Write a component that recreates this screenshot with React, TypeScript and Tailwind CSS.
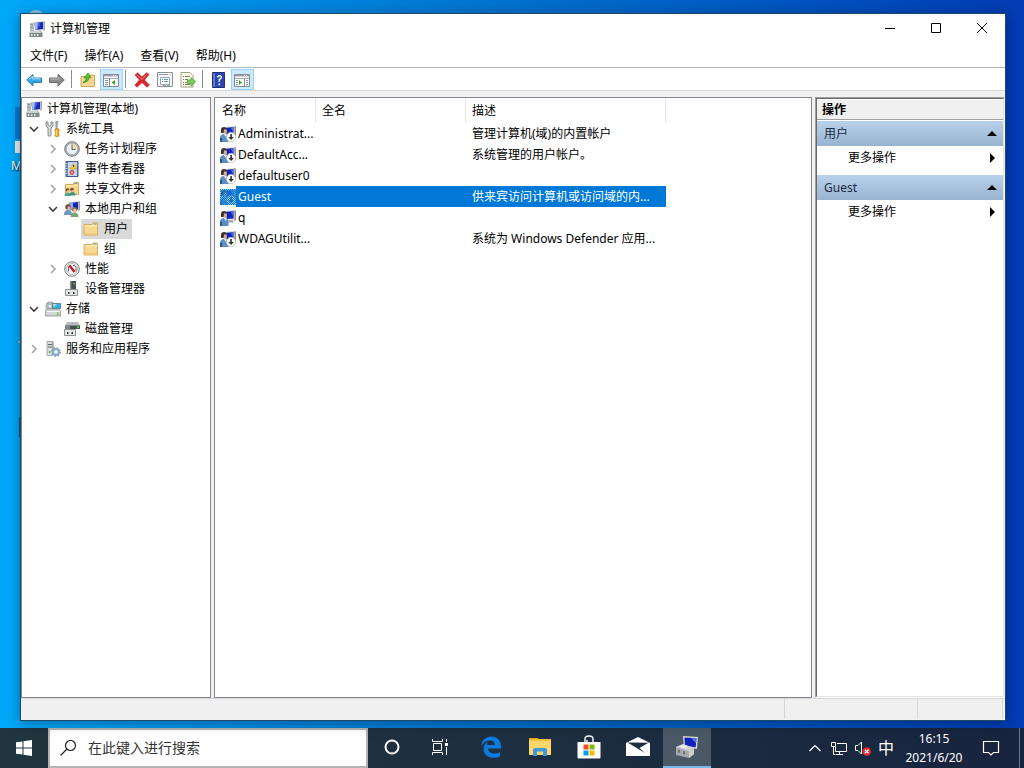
import { useState, ReactNode } from 'react';

type IconProps = { className?: string };

const Svg = ({ children, className = 'size-4', box = '0 0 16 16' }: { children: ReactNode; className?: string; box?: string }) => (
  <svg viewBox={box} className={`${className} shrink-0`} fill="none" aria-hidden="true">
    {children}
  </svg>
);

const ComputerIcon = ({ className }: IconProps) => (
  <Svg className={className}>
    <path d="M1 2h4v8H1z" fill="#b4babd" />
    <path d="M1.500 3h2.500v1H1.500zM1.500 6h2v1h-2z" fill="#8a9397" />
    <path d="m4 1 11-1v9L6 10z" fill="#dedcd3" />
    <path d="m14.500 0 1.500.5V9l-1.500 1z" fill="#a4a5a2" />
    <path d="m5.500 2 8.500-1v7l-7.500 1z" fill="#1428b8" />
    <path d="M5.500 2 9 1.500 8.500 8.500l-2 .5z" fill="#a4bbf3" />
    <path d="m9 1.500 2-.3v3L8.500 8z" fill="#4560e2" />
    <path d="m8 10 4-.5.500 1.500H8z" fill="#a4a7a6" />
    <path d="M.5 11h12l1 1v4H.5z" fill="#7f878a" />
    <path d="M1 10h10l1.500 2H.5z" fill="#cdd1d1" />
    <path d="M2 13h1.500v2H2zM5 13h1.500v2H5zM8 13h1.500v2H8z" fill="#dfe3e2" />
    <path d="M11 13h1v1h-1z" fill="#5fae4c" />
  </Svg>
);

const ToolsIcon = () => (
  <Svg>
    <path d="M1 1v4l2 2v7.500q1.500 1.500 3 0V7l2-2V1H6v3L4.500 5 3 4V1z" fill="#d4d7d8" stroke="#6f7578" strokeWidth=".8" />
    <path d="M11 0h1.500l.5 2-.8 1.500V8h-1.400V3.500L10.500 2z" fill="#a3a8aa" stroke="#7b8082" strokeWidth=".5" />
    <path d="M10 8h4v2l-.5 1 .5 4q-2 1.500-4 0l.5-4-.5-1z" fill="#f0ae18" stroke="#bd7b0b" strokeWidth=".7" />
    <path d="M11.300 9v6" stroke="#ffe08a" />
  </Svg>
);

const ClockIcon = () => (
  <Svg>
    <circle cx="8" cy="8" r="7.300" fill="#b9bcbd" stroke="#77797a" />
    <circle cx="8" cy="8" r="5.700" fill="#eaf1f9" stroke="#8f9599" strokeWidth=".6" />
    <path d="M8 2.800V8h5A5 5 0 0 0 8 2.800z" fill="#f4dca6" />
    <path d="M8 3.500V8.500h3.500" stroke="#4f617a" />
  </Svg>
);

const EventIcon = () => (
  <Svg>
    <path d="M2 .500h12v15H2z" fill="#5d7db5" stroke="#3d598e" />
    <path d="M4 1h9v14H4z" fill="#c5d5ec" />
    <path d="M1 2.500h2.500M1 5h2.500M1 7.500h2.500M1 10h2.500M1 12.500h2.500" stroke="#bfc7d3" />
    <path d="M9.500 2.500 12.800 8H6.200z" fill="#ffd528" stroke="#c4980e" strokeWidth=".6" />
    <path d="M9.500 4.200v2" stroke="#333" />
    <circle cx="8" cy="11.500" r="2.400" fill="#d94a4a" />
    <path d="m7.200 10.700 1.600 1.600m0-1.600-1.600 1.600" stroke="#fff" strokeWidth=".7" />
  </Svg>
);

const FolderIcon = () => (
  <Svg>
    <path d="M1 3.500h8l1-1.500h4.500v12H1z" fill="#f7da90" stroke="#d3aa58" strokeWidth=".9" />
    <path d="M10.500 3h3" stroke="#6d98bd" />
    <path d="M1.800 5h7.800l1-.5h3.200" stroke="#fff1c4" />
    <path d="M1.500 12h12.500v1.500H1.500z" fill="#efca76" />
  </Svg>
);

const SharedFolderIcon = () => (
  <Svg>
    <path d="M1.500 3.500H9l1-2h4.500v12h-13z" fill="#f5d584" stroke="#cda14a" strokeWidth=".9" />
    <path d="M10.500 2.500h3" stroke="#6d98bd" />
    <path d="M2 5h8l1-.5h3" stroke="#fff1c4" />
    <circle cx="3.500" cy="9" r="1.800" fill="#704a2c" />
    <circle cx="8" cy="8.500" r="1.800" fill="#704a2c" />
    <path d="M3 9h2v2H3zM7.500 9h2v2h-2z" fill="#e7b58d" />
    <path d="M.5 15q0-3.500 3-3.500t3.500 3.500z" fill="#57a58b" />
    <path d="M5.500 14.500q0-3.500 3-3.500t3 3.500z" fill="#3d8f86" />
  </Svg>
);

const UsersIcon = () => (
  <Svg>
    <path d="m4 1 11-1v9.500L5 10z" fill="#dbd9d1" />
    <path d="m14.500 0 1.500.5V9l-1.500 1z" fill="#9c9d9a" />
    <path d="m5.500 2 8.500-1v7.500H6z" fill="#1428b8" />
    <path d="M5.500 2 9 1.500V8H6z" fill="#8fa8ef" />
    <circle cx="4" cy="6" r="2.700" fill="#6b4a30" />
    <path d="M3.500 5.500h2.700v3.500H3.500z" fill="#e6b58f" />
    <path d="M0 14q0-5 4-5t4 5z" fill="#6b97c4" />
    <circle cx="10.500" cy="8.500" r="2.500" fill="#9c7a4d" />
    <path d="M9.500 8h2.500v3.500H9.500z" fill="#edc19d" />
    <path d="M6.500 16q0-4.500 4-4.500t4 4.500z" fill="#7aa56f" />
  </Svg>
);

const PerformanceIcon = () => (
  <Svg>
    <circle cx="8" cy="8" r="7.300" fill="#f7f7f6" stroke="#777b7d" />
    <circle cx="8" cy="8" r="5.500" fill="#fff" stroke="#a2a7a8" strokeWidth=".8" />
    <path d="M4.500 10.500V6l1-1.500M9 4.500h1.500l1.500 2v4" stroke="#5c6b71" />
    <path d="m5.500 4.500 5 6.500" stroke="#d01018" strokeWidth="2.400" />
  </Svg>
);

const DeviceIcon = () => (
  <Svg>
    <path d="M6 0h6v9H6z" fill="#4a4f50" />
    <path d="M6 0h1.500v9H6z" fill="#82898a" />
    <path d="M9.500 2H11v1.500H9.500z" fill="#50e84b" />
    <path d="M1.500 8.500h12v6h-12z" fill="#e6e6e4" stroke="#8c9192" />
    <path d="M4 11h1.500v2H4zM9 11h1.500v2H9z" fill="#303435" />
  </Svg>
);

const StorageIcon = () => (
  <Svg>
    <path d="M1 4q0-3 3-3h4v8H1z" fill="#d5dadb" stroke="#a2a8aa" strokeWidth=".8" />
    <circle cx="5" cy="5" r="3.500" fill="#b7bfc2" stroke="#8f989b" strokeWidth=".6" />
    <circle cx="5" cy="5" r="1" fill="#fff" />
    <path d="M7.500 2.500h8v5h-8z" fill="#39a9df" stroke="#4b7787" strokeWidth=".8" />
    <path d="M8 3h4L8.500 6.500z" fill="#9fe0f8" />
    <path d="m.5 10 2-2h10l3 2v5H.5z" fill="#d3d6d6" stroke="#858b8d" strokeWidth=".8" />
    <path d="M1 10.500h14" stroke="#f7f7f7" />
    <path d="M12 11.500h1.500V14H12z" fill="#3ccc38" />
  </Svg>
);

const DiskIcon = () => (
  <Svg>
    <path d="m1 5 2-4h11l2 4z" fill="#b7bcbc" />
    <path d="M1 4.500h15V8H1z" fill="#4a5051" />
    <path d="M1 4.500h5V8H1z" fill="#838989" />
    <path d="M13 5.500h2V7h-2z" fill="#4ce24a" />
    <path d="M.5 8.500h11v6H.500z" fill="#e6e6e4" stroke="#8c9192" />
    <path d="M3 11h1.500v2H3zM7.500 11H9v2H7.500z" fill="#303435" />
  </Svg>
);

const ServicesIcon = () => (
  <Svg>
    <path d="M2 0h6l1 1v13H2z" fill="#b5bdc1" />
    <path d="M2 .5h5.500v14H2z" fill="#d8dee0" stroke="#8c979c" strokeWidth=".7" />
    <path d="M3 3.500h4M3 6h4" stroke="#5d686e" />
    <path d="M4 10h1.500v2H4z" fill="#45ba44" />
    <circle cx="11" cy="11" r="3.300" fill="#aac8e2" stroke="#7b9fbd" strokeWidth="1.200" />
    <circle cx="11" cy="11" r="4.300" stroke="#7b9fbd" strokeWidth="1.200" strokeDasharray="1.700 1.700" />
    <circle cx="11" cy="11" r="1.300" fill="#fff" />
  </Svg>
);

const UserIcon = ({ disabled, selected }: { disabled: boolean; selected: boolean }) => (
  <Svg>
    <path d="m4 1 11-1v10.500L5 11z" fill="#d6d4cc" />
    <path d="m14.500 0 1.500.5v10l-1.500.5z" fill="#8e8e8c" />
    <path d="m5 2 8.500-1v7.500L6 9z" fill="#1025bd" />
    <path d="m10.500 1.500 3-.5v6z" fill="#4f6be6" />
    <path d="M9 10.500h3.500l1.500 2H8z" fill="#9c9e9d" />
    <path d="M1 4q0-3 3-3 2.500 0 3 3v3H1z" fill="#3e342c" />
    <path d="M4 3.500h2.800v4.300H3.500z" fill="#d9b092" />
    <path d="M0 16v-5q1-3 4-3 4 0 4.500 3.500V16z" fill="#5b8fc3" />
    <path d="M0 16v-4h2v4z" fill="#2e5484" />
    <path d="m4 8 1.500 3L7 8z" fill="#e7f0f8" />
    {disabled && (
      <>
        <circle cx="11" cy="11" r="4.700" fill="#fff" stroke="#9ea3a6" strokeWidth=".6" />
        <path d="M10.300 8h1.600v3h2l-2.800 3-2.800-3h2z" fill="#333" />
      </>
    )}
    {selected && (
      <>
        <pattern id="dither" width="2" height="2" patternUnits="userSpaceOnUse">
          <path d="M0 0h1v1H0zM1 1h1v1H1z" fill="#0078d7" />
        </pattern>
        <path d="M0 0h16v16H0z" fill="#3d9be4" fillOpacity=".45" />
        <path d="M0 0h16v16H0z" fill="url(#dither)" shapeRendering="crispEdges" />
      </>
    )}
  </Svg>
);

const BackIcon = () => (
  <Svg>
    <path d="M.7 8 7 2.500V6h8.500v4.500H7V14z" fill="#37a6e6" stroke="#23729f" strokeWidth=".9" />
    <path d="M2.500 7.700 6.500 4.500v2.300h8" stroke="#a9e1ff" />
  </Svg>
);

const ForwardIcon = () => (
  <Svg>
    <path d="M15.300 8 9 2.500V6H.5v4.500H9V14z" fill="#8c8c8c" stroke="#5e5e5e" strokeWidth=".9" />
    <path d="M1.500 7h8.300V5" stroke="#bbb" />
  </Svg>
);

const UpFolderIcon = () => (
  <Svg>
    <path d="M1 4.500h8l1-1.500h4.500v11.500H1z" fill="#f1d48b" stroke="#c9a553" strokeWidth=".9" />
    <path d="M2 13h12" stroke="#fae5a8" />
    <path d="M3 10.500q3-1 3.500-5L4 6l4-5 3 4.500-2-.3Q9 10 3 10.500z" fill="#54c531" stroke="#278214" strokeWidth=".7" />
  </Svg>
);

const PaneIcon = ({ right }: { right?: boolean }) => (
  <Svg>
    <path d="M.5 2.500h15v12H.5z" fill="#fff" stroke="#868b91" />
    <path d="M1 3h14v1.500H1z" fill="#9aa3ab" />
    <path d="M10 3.500h1M12 3.500h1" stroke="#fff" />
    <path d="M1 6.500h14" stroke="#a0a5a9" />
    {right ? (
      <>
        <path d="M10.500 7v7" stroke="#868b91" />
        <path d="m5 8 3 2.500L5 13z" fill="#36a41f" />
        <path d="M2 8.500h2M2 10.500h2M2 12.500h2M12 8.500h2M12 10.500h2M12 12.500h2" stroke="#7d96ad" />
      </>
    ) : (
      <>
        <path d="M6.500 7v7" stroke="#868b91" />
        <path d="m12 8-3.500 2.500L12 13z" fill="#36a41f" />
        <path d="M2 8.500h3M2 10.500h3M2 12.500h3" stroke="#7d96ad" />
      </>
    )}
  </Svg>
);

const DeleteIcon = () => (
  <Svg>
    <path d="M1 3 3.500.8 8 5l4.500-4.200L15 2.500 10.500 8l5 5L13 15.300 8 10.500 3 15.300.8 13 5.500 8z" fill="#d9262a" stroke="#b5272b" strokeWidth=".6" />
    <path d="M2.500 2.700 8 7.500l4.500-5" stroke="#f38585" />
  </Svg>
);

const PropertiesIcon = () => (
  <Svg>
    <path d="M.5.500h15v14H.5z" fill="#f8f9fa" stroke="#8b9094" />
    <path d="M2 2.500h9M12.500 2.500h1" stroke="#929ca5" />
    <path d="M3.500 5.500h9v7h-9z" stroke="#98a6b2" fill="#fff" />
    <path d="M5 7.500h1M7 7.500h4M5 9.500h1M7 9.500h4" stroke="#5a9bd0" />
    <path d="M6 13.500h3M10 13.500h3" stroke="#98a6b2" />
  </Svg>
);

const ExportIcon = () => (
  <Svg>
    <path d="M1 .5h9l3 3V15H1z" fill="#fffce6" stroke="#9a927b" strokeWidth=".9" />
    <path d="M3 4.500h1M5 4.500h5M3 7.500h1M5 7.500h3M3 10.500h1M5 10.500h3M3 12.500h1M5 12.500h5" stroke="#7e7b70" />
    <path d="M7.500 8H11V5.500l4.800 4.200L11 14v-2.500H7.500z" fill="#7ccb5d" stroke="#4ca332" strokeWidth=".7" />
  </Svg>
);

const HelpIcon = () => (
  <Svg>
    <path d="M1.500 .5h12v15h-12z" fill="#2948b3" stroke="#1d3178" />
    <path d="M2 1h2v14H2z" fill="#6279c9" />
    <path d="M6 5.500V4h1V3h3v1h1v2.500h-1v1H9v2.300H7.500V7h1V6h1V4.500h-2v1zM7.500 11.500h1.600v1.700H7.500z" fill="#fff" />
  </Svg>
);

type TreeNode = { label: string; depth: number; icon: ReactNode; state?: 'open' | 'closed' };

const tree: TreeNode[] = [
  { label: '系统工具', depth: 0, icon: <ToolsIcon />, state: 'open' },
  { label: '任务计划程序', depth: 1, icon: <ClockIcon />, state: 'closed' },
  { label: '事件查看器', depth: 1, icon: <EventIcon />, state: 'closed' },
  { label: '共享文件夹', depth: 1, icon: <SharedFolderIcon />, state: 'closed' },
  { label: '本地用户和组', depth: 1, icon: <UsersIcon />, state: 'open' },
  { label: '用户', depth: 2, icon: <FolderIcon /> },
  { label: '组', depth: 2, icon: <FolderIcon /> },
  { label: '性能', depth: 1, icon: <PerformanceIcon />, state: 'closed' },
  { label: '设备管理器', depth: 1, icon: <DeviceIcon /> },
  { label: '存储', depth: 0, icon: <StorageIcon />, state: 'open' },
  { label: '磁盘管理', depth: 1, icon: <DiskIcon /> },
  { label: '服务和应用程序', depth: 0, icon: <ServicesIcon />, state: 'closed' },
];

const indents = ['pl-1', 'pl-[23px]', 'pl-[42px]'];

const users = [
  { name: 'Administrat...', description: '管理计算机(域)的内置帐户', disabled: true },
  { name: 'DefaultAcc...', description: '系统管理的用户帐户。', disabled: true },
  { name: 'defaultuser0', description: '', disabled: true },
  { name: 'Guest', description: '供来宾访问计算机或访问域的内...', disabled: true },
  { name: 'q', description: '', disabled: false },
  { name: 'WDAGUtilit...', description: '系统为 Windows Defender 应用...', disabled: true },
];

const ToolButton = ({ label, active, children }: { label: string; active?: boolean; children: ReactNode }) => (
  <button
    type="button"
    aria-label={label}
    className={`flex h-[21px] w-[23px] items-center justify-center border pt-px pr-px ${active ? 'border-[#99d1ff] bg-[#cce8ff]' : 'border-transparent'}`}
  >
    {children}
  </button>
);

const ToolDivider = () => (
  <div className="flex w-2 self-center pl-0.5">
    <div className="h-[18px] w-px bg-[#8d8d8d]" />
  </div>
);

const TitleBar = () => (
  <header className="flex h-[30px] items-center bg-white">
    <div className="flex flex-1 items-center gap-[5px] pl-2">
      <ComputerIcon />
      <h1>计算机管理</h1>
    </div>
    <button type="button" aria-label="最小化" className="flex h-full w-[46px] items-center justify-center">
      <Svg className="size-3" box="0 0 12 12"><path d="M1 5.500h10" stroke="#000" /></Svg>
    </button>
    <button type="button" aria-label="最大化" className="flex h-full w-[46px] items-center justify-center">
      <Svg className="size-3" box="0 0 12 12"><path d="M1.500.500h9v9h-9z" stroke="#000" /></Svg>
    </button>
    <button type="button" aria-label="关闭" className="flex h-full w-[46px] items-center justify-center">
      <Svg className="size-3" box="0 0 12 12"><path d="m1 0 10 10M11 0 1 10" stroke="#000" /></Svg>
    </button>
  </header>
);

const Toolbar = () => (
  <div className="flex h-[23px] items-end border-b border-[#d9d9d9] bg-white pl-0.5">
    <ToolButton label="后退"><BackIcon /></ToolButton>
    <ToolButton label="前进"><ForwardIcon /></ToolButton>
    <ToolDivider />
    <ToolButton label="向上"><UpFolderIcon /></ToolButton>
    <ToolButton label="控制台树" active><PaneIcon /></ToolButton>
    <ToolDivider />
    <ToolButton label="删除"><DeleteIcon /></ToolButton>
    <ToolButton label="属性"><PropertiesIcon /></ToolButton>
    <ToolButton label="导出列表"><ExportIcon /></ToolButton>
    <ToolDivider />
    <ToolButton label="帮助"><HelpIcon /></ToolButton>
    <ToolButton label="操作窗格" active><PaneIcon right /></ToolButton>
  </div>
);

const Tree = () => {
  const [selected, setSelected] = useState<string>('用户');

  return (
    <nav className="w-[190px] shrink-0 border border-[#828790] bg-white pt-px">
      <button type="button" className="flex h-5 items-center gap-[5px] pl-1">
        <ComputerIcon />
        计算机管理(本地)
      </button>
      <ul>
        {tree.map((node) => (
          <li key={node.label} className={`flex h-5 items-center gap-px ${indents[node.depth]}`}>
            <span className="flex w-4 justify-center">
              {node.state && (
                <button type="button" aria-label={node.state === 'open' ? '折叠' : '展开'}>
                  <Svg className="size-3" box="0 0 12 12">
                    {node.state === 'open' ? (
                      <path d="m2 4 4 4 4-4" stroke="#404040" strokeWidth="1.600" />
                    ) : (
                      <path d="m4 2 4 4-4 4" stroke="#a6a6a6" strokeWidth="1.600" />
                    )}
                  </Svg>
                </button>
              )}
            </span>
            <button
              type="button"
              onClick={() => setSelected(node.label)}
              className={`flex h-5 items-center gap-[5px] pr-1 pl-0.5 ${selected === node.label ? 'bg-[#d9d9d9]' : ''}`}
            >
              {node.icon}
              {node.label}
            </button>
          </li>
        ))}
      </ul>
    </nav>
  );
};

const UserList = () => {
  const [selected, setSelected] = useState<string>('Guest');

  return (
    <main className="min-w-0 flex-1 overflow-hidden border border-[#828790] bg-white">
      <table className="w-[451px] table-fixed border-separate border-spacing-0 text-left">
        <thead>
          <tr className="h-[25px]">
            <th className="w-[101px] border-r border-[#e5e5e5] p-0 pl-[7px] font-normal">名称</th>
            <th className="w-[150px] border-r border-[#e5e5e5] p-0 pl-1.5 font-normal">全名</th>
            <th className="w-[200px] border-r border-[#e5e5e5] p-0 pl-1.5 font-normal">描述</th>
          </tr>
        </thead>
        <tbody>
          {users.map((user) => {
            const active = selected === user.name;
            return (
              <tr key={user.name} onClick={() => setSelected(user.name)} className={`h-[21px] ${active ? 'text-white' : ''}`}>
                <td className="p-0 pl-[5px]">
                  <div className="flex h-[21px] items-center">
                    <UserIcon disabled={user.disabled} selected={active} />
                    <span className={`flex h-full flex-1 items-center pl-0.5 ${active ? 'bg-[#0078d7]' : ''}`}>{user.name}</span>
                  </div>
                </td>
                <td className={`p-0 ${active ? 'bg-[#0078d7]' : ''}`} />
                <td className={`truncate p-0 pl-1.5 ${active ? 'bg-[#0078d7]' : ''}`}>{user.description}</td>
              </tr>
            );
          })}
        </tbody>
      </table>
    </main>
  );
};

const ActionGroup = ({ title }: { title: string }) => (
  <section className="mb-[5px]">
    <button type="button" className="flex h-[25px] w-full items-center justify-between bg-linear-to-b from-[#b9d1ea] to-[#99b4d1] pr-1.5 pl-[7px] text-[#1b2a40]">
      {title}
      <Svg className="h-[5px] w-[10px]" box="0 0 10 5"><path d="m5 0 5 5H0z" fill="#000" /></Svg>
    </button>
    <button type="button" className="flex h-6 w-full items-center justify-between pr-2 pl-[31px]">
      更多操作
      <Svg className="h-[10px] w-[5px]" box="0 0 5 10"><path d="m0 0 5 5-5 5z" fill="#000" /></Svg>
    </button>
  </section>
);

const Actions = () => (
  <aside className="flex w-[190px] shrink-0 flex-col border border-t-[#a0a0a0] border-r-[#f0f0f0] border-b-white border-l-[#a0a0a0]">
    <div className="flex-1 border border-t-[#696969] border-r-[#e3e3e3] border-b-[#e3e3e3] border-l-[#696969] bg-white">
      <h2 className="mb-px flex h-[21px] items-center border-t border-b border-t-white border-b-[#a0a0a0] bg-[#f0f0f0] pl-[5px] font-bold">操作</h2>
      <ActionGroup title="用户" />
      <ActionGroup title="Guest" />
    </div>
  </aside>
);

const TaskButton = ({ label, active, children }: { label: string; active?: boolean; children: ReactNode }) => (
  <button
    type="button"
    aria-label={label}
    className={`flex h-10 w-12 items-center justify-center border-b-2 ${active ? 'border-[#76b9ed] bg-[#4b5865]' : 'border-transparent'}`}
  >
    {children}
  </button>
);

const Taskbar = () => (
  <footer className="flex h-10 items-center bg-linear-to-r from-[#20353e] via-[#1d2f40] to-[#18243f] text-white">
    <button type="button" aria-label="开始" className="flex h-10 w-12 items-center justify-center">
      <Svg>
        <path d="M0 2.300 6.500 1.400v6.100H0zM7.500 1.200 16 0v7.500H7.500zM0 8.500h6.500v6.100L0 13.700zM7.500 8.500H16V16l-8.500-1.200z" fill="#fff" />
      </Svg>
    </button>
    <label className="flex h-10 w-[320px] items-center gap-3 border-2 border-[#b3b3b3] bg-white pl-2.5">
      <Svg>
        <circle cx="10.500" cy="5.500" r="5" stroke="#222" strokeWidth="1.200" />
        <path d="M7 9 .500 15.500" stroke="#222" strokeWidth="1.300" />
      </Svg>
      <input type="text" aria-label="搜索" placeholder="在此键入进行搜索" className="min-w-0 flex-1 text-sm text-black outline-none placeholder:text-[#333]" />
    </label>
    <TaskButton label="Cortana">
      <Svg><circle cx="8" cy="8" r="6.500" stroke="#fff" strokeWidth="2" /></Svg>
    </TaskButton>
    <TaskButton label="任务视图">
      <Svg>
        <path d="M.5 0v2.500h10V0M.5 16v-2.500h10V16M1.500 4.500h8v7h-8zM14.500 0v3M14.500 8v8" stroke="#fff" />
        <path d="M13 4h3v3h-3z" fill="#fff" />
      </Svg>
    </TaskButton>
    <div className="ml-[3px] flex gap-px">
      <TaskButton label="Edge">
        <Svg className="size-[22px]" box="0 0 22 22">
          <path d="M1 10C2 4 6 .500 11.300.500 17.500.500 21 5 21 10v2.500H8c.2 3.500 3 5 6.500 5 2 0 4-.6 5.500-1.600v4.300c-2 1-4.300 1.500-6.800 1.500-6 0-9.700-3.400-9.700-8.700 0-3.200 1.900-6 5.200-7.500-1 1-1.500 2.100-1.700 3.500h7.800c0-3-1.500-4.500-4.500-4.500C6.500 4.500 3.300 6.500 1 10z" fill="#0a7be0" />
        </Svg>
      </TaskButton>
      <TaskButton label="文件资源管理器">
        <Svg className="size-[22px]" box="0 0 22 22">
          <path d="M0 2h9l1.500 2H0z" fill="#e59c0b" />
          <path d="M0 3.500h22V19H0z" fill="#ffd667" />
          <path d="M0 3.500h9.500L11 3h11v2H0z" fill="#f5bd3c" />
          <path d="M4 20v-6q0-2 2-2h10q2 0 2 2v6h-4v-4.500H8V20z" fill="#3c97dc" />
        </Svg>
      </TaskButton>
      <TaskButton label="Microsoft Store">
        <Svg className="size-6" box="0 0 24 24">
          <path d="M.5 7h23v15.500q0 1-1 1h-21q-1 0-1-1z" fill="#fff" />
          <path d="M8 7V4q0-3 4-3t4 3v3M10 7V5" stroke="#fff" strokeWidth="1.400" />
          <path d="M6.500 9.500h5v5h-5z" fill="#f25022" />
          <path d="M12.500 9.500h5v5h-5z" fill="#7fba00" />
          <path d="M6.500 15.500h5v5h-5z" fill="#00a4ef" />
          <path d="M12.500 15.500h5v5h-5z" fill="#ffb900" />
        </Svg>
      </TaskButton>
      <TaskButton label="邮件">
        <Svg className="size-6" box="0 0 24 24">
          <path d="M0 8 12 2l12 6v13H0z" fill="#fff" />
          <path d="m1.500 7.500 21 .3L13.500 13l5.500 5z" fill="#1c2f40" />
        </Svg>
      </TaskButton>
      <TaskButton label="计算机管理" active>
        <Svg className="size-6" box="0 0 24 24">
          <path d="m8 1 15 1-1 12-13-2z" fill="#d9dad8" />
          <path d="m9.500 2.500 12 .8-.8 9-10.700-1.500z" fill="#1020b8" />
          <path d="m16 3 5.500.3-.5 5z" fill="#5874ee" />
          <path d="m10 12 9 1.500-2 3-8-1z" fill="#9b9e9f" />
          <path d="m1 12 7-3 11 4v6l-5 4-13-3z" fill="#a4aaad" />
          <path d="m1 12 7-3 11 4-5 3z" fill="#d0d4d5" />
          <path d="m4 11.500 4-1.500 5 1.700-3.500 1.600z" fill="#eceeee" />
          <path d="m14 16 5-3v6l-5 4z" fill="#d2d0c6" />
          <path d="M3 14.500 5 15v3l-2-.5zM8 16l2 .4v3l-2-.4z" fill="#6d757a" />
        </Svg>
      </TaskButton>
    </div>
    <div className="ml-auto flex h-full items-center">
      <button type="button" aria-label="显示隐藏的图标" className="flex w-6 justify-center">
        <Svg className="size-3" box="0 0 12 12"><path d="m.5 9 5.500-5.500L11.500 9" stroke="#fff" strokeWidth="1.200" /></Svg>
      </button>
      <button type="button" aria-label="网络" className="flex w-6 justify-center">
        <Svg>
          <path d="M6 3.500h9.500v8H4.500V7M8.500 12v2.500M5 14.500h7M.5 2.500h4v4h-4zM2.500 6.500v8h2" stroke="#fff" />
        </Svg>
      </button>
      <button type="button" aria-label="音量" className="flex w-6 justify-center">
        <Svg>
          <path d="M.5 5.500H3l3.500-3.500v12L3 10.500H.5z" stroke="#fff" />
          <circle cx="11.700" cy="11.500" r="4.300" fill="#e22b2f" />
          <path d="m9.900 9.700 3.600 3.600m0-3.600-3.600 3.600" stroke="#fff" strokeWidth="1.300" />
        </Svg>
      </button>
      <button type="button" className="w-[22px] text-base">中</button>
      <time className="w-[74px] text-center leading-[19px]">
        16:15
        <br />
        2021/6/20
      </time>
      <button type="button" aria-label="通知" className="flex w-10 justify-center">
        <Svg className="size-[18px]" box="0 0 18 18"><path d="M1.500 2.500h15v11h-5L9 16l-2.500-2.500h-5z" stroke="#fff" strokeWidth="1.200" /></Svg>
      </button>
      <button type="button" aria-label="显示桌面" className="ml-2 h-full w-[5px] border-l border-[#6b7483]" />
    </div>
  </footer>
);

const App: React.FC = () => {
  return (
    <div className="flex min-h-screen flex-col font-['Noto_Sans','Noto_Sans_CJK_SC',sans-serif] text-xs text-black">
      <div className="relative flex flex-1 flex-col bg-linear-to-r from-[#00a8fa] via-[#0071cf] to-[#033bb3] pt-[13px] pr-[18px] pb-[7px] pl-5">
        {/* desktop shortcuts sitting behind the window */}
        <div className="absolute top-[10px] left-[26px] h-4 w-5 rounded-t-full bg-[#8ac4e8]" />
        <div className="absolute top-[107px] left-[15px] h-8 w-8 bg-[#0078d4]" />
        <div className="absolute top-[141px] left-[15px] h-3 w-4 bg-[#e8eef4]" />
        <div className="absolute top-[158px] left-[11px] text-white text-shadow-[1px_1px_2px_#000]">M</div>
        <div className="absolute top-[341px] left-[18px] h-0.5 w-4 bg-[#a0a8ac]" />
        <div className="absolute top-[417px] left-[19px] h-5 w-4 bg-[#24506c]" />

        <div className="relative flex flex-1 flex-col border border-[#1c4a6b] bg-[#f0f0f0] shadow-[0_2px_12px_rgba(0,0,0,0.35)]">
          <TitleBar />
          <div className="flex h-6 items-center gap-[17px] border-b border-[#b0b5bf] bg-white pl-[9px]">
            <button type="button">文件(F)</button>
            <button type="button">操作(A)</button>
            <button type="button">查看(V)</button>
            <button type="button">帮助(H)</button>
          </div>
          <Toolbar />
          <div className="flex flex-1 gap-[3px] pt-1.5">
            <Tree />
            <UserList />
            <Actions />
          </div>
          <div className="flex h-[22px] justify-end border-t border-[#d7d7d7] pr-0.5 pb-px">
            <div className="w-[133px] border-l border-[#d7d7d7]" />
            <div className="w-[86px] border-x border-[#d7d7d7]" />
          </div>
        </div>
      </div>
      <Taskbar />
    </div>
  );
};

export default App;
